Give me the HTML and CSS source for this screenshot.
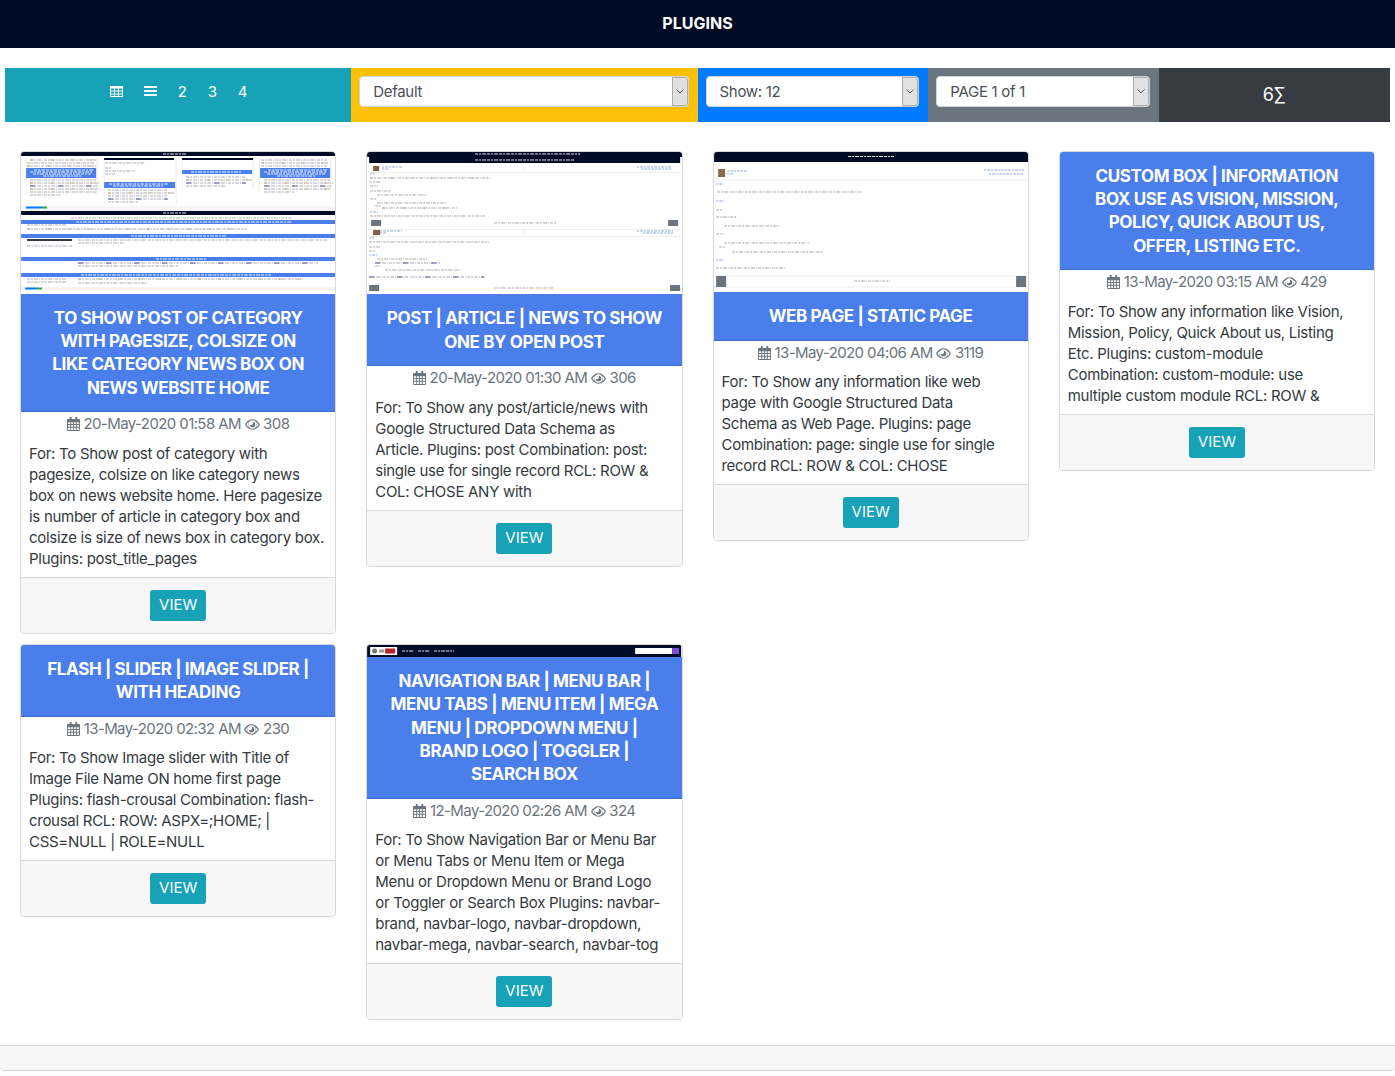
FILE: index.html
```html
<!DOCTYPE html>
<html lang="en">
<head>
<meta charset="utf-8">
<title>Plugins</title>
<link rel="stylesheet" href="styles.css">
</head>
<body>
<svg class="defs" width="0" height="0" aria-hidden="true">
  <symbol id="cal" viewBox="0 0 14 15"><path fill-rule="evenodd" d="M3 0h2v2h4V0h2v2h2a1 1 0 0 1 1 1v11a1 1 0 0 1-1 1H1a1 1 0 0 1-1-1V3a1 1 0 0 1 1-1h2zM1 5.500v2h2.500v-2zm3.500 0v2H6.500v-2zm3 0v2h2v-2zm3 0v2H13v-2zM1 8.500v2h2.500v-2zm3.500 0v2H6.500v-2zm3 0v2h2v-2zm3 0v2H13v-2zM1 11.500V14h2.500v-2.500zm3.500 0V14H6.500v-2.500zm3 0V14h2v-2.500zm3 0V14H13v-2.500z"/></symbol>
  <symbol id="eye" viewBox="0 0 16 11"><path fill-rule="evenodd" d="M8 0c3.400 0 6.300 2.100 8 5.500C14.300 8.900 11.400 11 8 11S1.700 8.900 0 5.500C1.700 2.100 4.600 0 8 0zM8 1a4.500 4.500 0 1 0 0 9 4.500 4.500 0 0 0 0-9zM1.400 5.500A9 9 0 0 0 4 8.300 5.500 5.500 0 0 1 4 2.700a9 9 0 0 0-2.600 2.800zm13.200 0A9 9 0 0 0 12 2.700a5.500 5.500 0 0 1 0 5.600 9 9 0 0 0 2.600-2.800zM8 2.500a3 3 0 1 1-3 3 1.500 1.500 0 0 0 3-3z"/></symbol>
</svg>

<header class="topbar">PLUGINS</header>

<section class="toolbar">
  <div class="tool tool-teal">
    <svg class="ico-grid" viewBox="0 0 13 11" aria-hidden="true"><path fill="#fff" fill-rule="evenodd" d="M0 0h13v11H0zM1 2.500v2h3v-2zm4 0v2h3v-2zm4 0v2h3v-2zM1 5.500v2h3v-2zm4 0v2h3v-2zm4 0v2h3v-2zM1 8.500V10h3V8.500zm4 0V10h3V8.500zm4 0V10h3V8.500z"/></svg>
    <svg class="ico-bars" viewBox="0 0 13 10" aria-hidden="true"><path fill="#fff" d="M0 0h13v2H0zM0 4h13v2H0zM0 8h13v2H0z"/></svg>
    <span class="num">2</span><span class="num">3</span><span class="num">4</span>
  </div>
  <div class="tool tool-yellow"><div class="sel"><select><option>Default</option></select><span class="sel-btn"><svg viewBox="0 0 8 5" aria-hidden="true"><path d="M.5.500 4 4 7.500.500" fill="none" stroke="#555"/></svg></span></div></div>
  <div class="tool tool-blue"><div class="sel"><select><option>Show: 12</option></select><span class="sel-btn"><svg viewBox="0 0 8 5" aria-hidden="true"><path d="M.5.500 4 4 7.500.500" fill="none" stroke="#555"/></svg></span></div></div>
  <div class="tool tool-grey"><div class="sel"><select><option>PAGE 1 of 1</option></select><span class="sel-btn"><svg viewBox="0 0 8 5" aria-hidden="true"><path d="M.5.500 4 4 7.500.500" fill="none" stroke="#555"/></svg></span></div></div>
  <div class="tool tool-dark">6∑</div>
</section>

<main class="grid">

  <article class="card">
    <svg class="thumb h142" viewBox="0 0 314 142" aria-hidden="true">
      <rect width="314" height="142" fill="#fff"/>
      <rect width="314" height="4" fill="#000c25"/>
      <path class="tw" d="M142 2h24"/>
      <path class="rule" d="M5 6v38M76 6v38M83 6v46M155 6v46M161 6v30M232 6v30M238 6v34M310 6v34"/>
      <rect x="83" y="6" width="70" height="2" fill="#000c25"/>
      <rect x="161" y="6" width="71" height="2" fill="#000c25"/>
      <path class="tc" d="M9 8h66M6 11h68M6 14h70M240 8h66M240 11h68M240 14h66M84 11h40M84 16h6M84 19h30M84 22h10"/>
      <path class="ty" d="M9 8h66M6 14h70M240 11h68"/>
      <rect x="5" y="16" width="70" height="10" fill="#4a7eea"/>
      <rect x="83" y="30" width="71" height="6" fill="#4a7eea"/>
      <rect x="161" y="18" width="70" height="4" fill="#4a7eea"/>
      <rect x="239" y="16" width="70" height="10" fill="#4a7eea"/>
      <path class="tw" d="M13 18h60M9 20h62M12 22h58M22 24h38M88 32h60M92 34h50M170 20h50M247 18h60M243 20h62M246 22h58M256 24h38"/>
      <path class="tc" d="M9 28h66M9 31h70M9 34h68M9 37h70M9 40h66M9 43h30M87 38h60M87 41h66M87 44h60M87 47h60M87 50h30M165 25h60M165 28h66M165 31h60M165 34h40M243 28h66M243 31h70M243 34h68M243 37h66M243 40h30"/>
      <path class="ty" d="M9 31h70M9 37h70M87 41h66M165 28h66M243 31h70M243 37h66"/>
      <path class="tv" d="M9 34h68M87 47h60M165 31h60M243 34h68"/>
      <rect y="54" width="314" height="5" fill="#f5f5f5"/>
      <path d="M5 55.500h8M13 55.500h8" stroke="#007bff" stroke-width="2"/><path d="M21 55.500h5" stroke="#28a745" stroke-width="2"/>
      <rect y="59" width="314" height="4" fill="#000c25"/>
      <path class="tw" d="M142 61h24"/>
      <path class="tc" d="M50 66h220"/>
      <rect y="68" width="314" height="4" fill="#4a7eea"/>
      <path class="tw" d="M55 70h215"/>
      <path class="tc" d="M6 73h40M6 77h220"/>
      <path class="ty" d="M6 77h220"/>
      <rect y="82" width="314" height="4" fill="#4a7eea"/>
      <path class="tw" d="M110 84h95"/>
      <rect x="6" y="87" width="45" height="2" fill="#343a40"/>
      <path class="tc" d="M57 88h250M57 91h45M6 94h45"/>
      <rect y="105" width="314" height="4" fill="#4a7eea"/>
      <path class="tw" d="M135 107h50"/>
      <path class="tc" d="M57 111h240M57 114h100"/>
      <path class="tv" d="M57 111h240"/>
      <rect y="121" width="314" height="4" fill="#4a7eea"/>
      <path class="tw" d="M60 123h190"/>
      <path class="tc" d="M6 127h40M57 127h225M6 130h40M57 131h70"/>
      <path class="ty" d="M57 127h225"/>
      <rect y="135" width="314" height="3" fill="#f5f5f5"/>
      <path d="M4 136.500h12" stroke="#007bff" stroke-width="2"/>
      <path d="M16 136.500h5" stroke="#28a745" stroke-width="2"/>
    </svg>
    <h5 class="title">TO SHOW POST OF CATEGORY<br>WITH PAGESIZE, COLSIZE ON<br>LIKE CATEGORY NEWS BOX ON<br>NEWS WEBSITE HOME</h5>
    <p class="meta"><svg class="cal"><use href="#cal"/></svg> 20-May-2020 01:58 AM <svg class="eye"><use href="#eye"/></svg> 308</p>
    <p class="text">For: To Show post of category with<br>pagesize, colsize on like category news<br>box on news website home. Here pagesize<br>is number of article in category box and<br>colsize is size of news box in category box.<br>Plugins: post_title_pages</p>
    <div class="foot"><a class="btn">VIEW</a></div>
  </article>

  <article class="card">
    <svg class="thumb h143" viewBox="0 0 314 142.600" aria-hidden="true">
      <rect width="314" height="143" fill="#fff"/>
      <rect width="316" height="5" fill="#000c25"/>
      <path class="tw" d="M108 2h105"/>
      <rect x="2" y="5" width="311" height="6" fill="#000c25"/>
      <path class="tw" d="M108 8h100"/>
      <rect x="6" y="14" width="6" height="5" fill="#8a5c3e"/>
      <path class="tb" d="M15 15h20M15 17h6M270 15h35M274 17h30"/>
      <path class="rule" d="M157 13v7M0 20.500h314M0 77.500h314M157 77v7M0 84.500h314"/>
      <path class="tb" d="M3 22h5M3 60h8"/>
      <path class="tc" d="M3 26h120M2 30h12M3 34h8M3 39h20M10 43h50M3 47h6M10 51h70M8 54h6M15 56h75M3 64h115"/>
      <path class="ty" d="M3 26h120M15 56h75"/>
      <rect x="4" y="68" width="10" height="6" fill="#6c757d"/>
      <rect x="301" y="68" width="10" height="6" fill="#6c757d"/>
      <path class="tc" d="M127 71h62"/>
      <rect x="6" y="78" width="7" height="5" fill="#8a5c3e"/>
      <path class="tb" d="M13 79h22M13 81h6M270 79h36M276 81h30"/>
      <path class="tb" d="M2 86h5M2 103h8"/>
      <path class="tc" d="M2 90h120M2 95h12M2 99h6M10 107h50M8 111h65M8 114h5M18 118h75M2 125h115"/>
      <path class="tv" d="M8 111h65M2 125h115"/>
      <rect x="2" y="133" width="10" height="6" fill="#6c757d"/>
      <rect x="303" y="133" width="10" height="6" fill="#6c757d"/>
      <path class="tc" d="M127 136h60"/>
    </svg>
    <h5 class="title">POST | ARTICLE | NEWS TO SHOW<br>ONE BY OPEN POST</h5>
    <p class="meta"><svg class="cal"><use href="#cal"/></svg> 20-May-2020 01:30 AM <svg class="eye"><use href="#eye"/></svg> 306</p>
    <p class="text">For: To Show any post/article/news with<br>Google Structured Data Schema as<br>Article. Plugins: post Combination: post:<br>single use for single record RCL: ROW &amp;<br>COL: CHOSE ANY with</p>
    <div class="foot"><a class="btn">VIEW</a></div>
  </article>

  <article class="card">
    <svg class="thumb h141" viewBox="0 0 314 140.800" aria-hidden="true">
      <rect width="314" height="141" fill="#fff"/>
      <rect width="314" height="10" fill="#000c25"/>
      <path class="tw" d="M134 4.500h46"/>
      <rect x="4" y="17" width="7" height="8" fill="#8a6a4e"/>
      <path class="tb" d="M13 19h20M13 22h6M270 18h40M275 22h35"/>
      <path class="rule" d="M0 28h314M0 124h314M0 135h314"/>
      <path class="tb" d="M2 32h6M2 49h8M2 108h8"/>
      <path class="tc" d="M3 40h145M2 58h7M2 65h20M10 74h55M2 82h8M10 91h85M5 95h6M18 100h90M2 116h70"/>
      <rect x="2" y="124" width="10" height="11" fill="#6c757d"/>
      <rect x="302" y="124" width="10" height="11" fill="#6c757d"/>
      <path class="tc" d="M140 129h36"/>
    </svg>
    <h5 class="title">WEB PAGE | STATIC PAGE</h5>
    <p class="meta"><svg class="cal"><use href="#cal"/></svg> 13-May-2020 04:06 AM <svg class="eye"><use href="#eye"/></svg> 3119</p>
    <p class="text">For: To Show any information like web<br>page with Google Structured Data<br>Schema as Web Page. Plugins: page<br>Combination: page: single use for single<br>record RCL: ROW &amp; COL: CHOSE</p>
    <div class="foot"><a class="btn">VIEW</a></div>
  </article>

  <article class="card">
    <h5 class="title">CUSTOM BOX | INFORMATION<br>BOX USE AS VISION, MISSION,<br>POLICY, QUICK ABOUT US,<br>OFFER, LISTING ETC.</h5>
    <p class="meta"><svg class="cal"><use href="#cal"/></svg> 13-May-2020 03:15 AM <svg class="eye"><use href="#eye"/></svg> 429</p>
    <p class="text">For: To Show any information like Vision,<br>Mission, Policy, Quick About us, Listing<br>Etc. Plugins: custom-module<br>Combination: custom-module: use<br>multiple custom module RCL: ROW &amp;</p>
    <div class="foot"><a class="btn">VIEW</a></div>
  </article>

  <article class="card">
    <h5 class="title">FLASH | SLIDER | IMAGE SLIDER |<br>WITH HEADING</h5>
    <p class="meta"><svg class="cal"><use href="#cal"/></svg> 13-May-2020 02:32 AM <svg class="eye"><use href="#eye"/></svg> 230</p>
    <p class="text">For: To Show Image slider with Title of<br>Image File Name ON home first page<br>Plugins: flash-crousal Combination: flash-<br>crousal RCL: ROW: ASPX=;HOME; |<br>CSS=NULL | ROLE=NULL</p>
    <div class="foot"><a class="btn">VIEW</a></div>
  </article>

  <article class="card">
    <svg class="thumb h12" viewBox="0 0 314 12" aria-hidden="true">
      <rect width="314" height="12" fill="#000c25"/>
      <rect x="3" y="2" width="27" height="8" fill="#fff"/>
      <circle cx="7.500" cy="6" r="2.500" fill="#777"/>
      <rect x="12" y="4.500" width="5" height="3" fill="#999"/>
      <rect x="18" y="3.500" width="10" height="5" fill="#c0202a"/>
      <path class="tw" d="M35 6h12M51 6h12M67 6h20"/>
      <rect x="268" y="3" width="37" height="6" fill="#fff"/>
      <rect x="305" y="3" width="7" height="6" fill="#7a4fe0"/>
    </svg>
    <h5 class="title">NAVIGATION BAR | MENU BAR |<br>MENU TABS | MENU ITEM | MEGA<br>MENU | DROPDOWN MENU |<br>BRAND LOGO | TOGGLER |<br>SEARCH BOX</h5>
    <p class="meta"><svg class="cal"><use href="#cal"/></svg> 12-May-2020 02:26 AM <svg class="eye"><use href="#eye"/></svg> 324</p>
    <p class="text">For: To Show Navigation Bar or Menu Bar<br>or Menu Tabs or Menu Item or Mega<br>Menu or Dropdown Menu or Brand Logo<br>or Toggler or Search Box Plugins: navbar-<br>brand, navbar-logo, navbar-dropdown,<br>navbar-mega, navbar-search, navbar-tog</p>
    <div class="foot"><a class="btn">VIEW</a></div>
  </article>

</main>

<footer class="pagefoot"></footer>
</body>
</html>
```
FILE: styles.css
```css
* { box-sizing: border-box; }
html, body { margin: 0; padding: 0; }
body {
  font-family: Inter, "Open Sans", "Liberation Sans", sans-serif;
  font-size: 15px;
  line-height: 21px;
  color: #343a40;
  background: #fff;
}
.defs { position: absolute; }

.topbar {
  height: 48px;
  background: #000c25;
  color: #fff;
  font-weight: 700;
  font-size: 16px;
  line-height: 47px;
  text-align: center;
}

.toolbar {
  display: grid;
  grid-template-columns: 25% 25% 1fr 1fr 1fr;
  margin: 20px 5px 0;
  height: 54px;
}
.tool { padding: 8px 9px 8px 8px; }
.tool-teal {
  background: #17a2b8;
  color: #fff;
  display: flex;
  justify-content: center;
  align-items: center;
  gap: 21px;
  padding: 0 0 8px;
}
.tool-yellow { background: #ffc107; }
.tool-blue { background: #007bff; }
.tool-grey { background: #6c757d; }
.tool-dark {
  background: #373b42;
  color: #fff;
  font-size: 18px;
  text-align: center;
  line-height: 38px;
}
.ico-grid { width: 13px; height: 11px; }
.ico-bars { width: 13px; height: 10px; }
.num { width: 9px; text-align: center; }

.sel { position: relative; height: 31px; }
.sel select {
  display: block;
  width: 100%;
  height: 31px;
  padding: 0 13px;
  border: 1px solid #ced4da;
  border-radius: 4px;
  background: #fff;
  color: #495057;
  font: 15px Inter, "Open Sans", sans-serif;
  letter-spacing: -0.3px;
  appearance: none;
  -webkit-appearance: none;
}
.sel-btn {
  position: absolute;
  top: 1px;
  right: 1px;
  width: 16px;
  height: 29px;
  background: #e1e1e1;
  border: 1px solid #ababab;
  border-radius: 0 3px 3px 0;
  display: flex;
  align-items: center;
  justify-content: center;
}
.sel-btn svg { width: 8px; height: 5px; }

.grid {
  display: grid;
  grid-template-columns: repeat(4, 25%);
  align-items: start;
  margin: 28.500px 5px 0;
}
.card {
  margin: 0 15px 10px;
  border: 1px solid #d9d9d9;
  border-radius: 4px;
  overflow: hidden;
  background: #fff;
}
.thumb { display: block; width: 100%; filter: blur(.35px); }
.h142 { height: 142px; }
.h143 { height: 142.600px; }
.h141 { height: 140.800px; }
.h12 { height: 12px; }
.tw { stroke: #fff; stroke-width: 1; stroke-dasharray: 3 1 2 1 4 1; fill: none; opacity: .9; }
.tc { stroke: #7d7d8a; stroke-width: 1; stroke-dasharray: 3 1 2 1 4 1 1 1; fill: none; opacity: .65; }
.ty { stroke: #d2a35c; stroke-width: 1; stroke-dasharray: 3 17; fill: none; opacity: .8; }
.tv { stroke: #2f3a90; stroke-width: 1; stroke-dasharray: 5 23; fill: none; opacity: .8; }
.tb { stroke: #6f95d8; stroke-width: 1; stroke-dasharray: 2 1 3 1; fill: none; opacity: .8; }
.rule { stroke: #eeeeee; stroke-width: 1; fill: none; }

.title {
  margin: 0;
  padding: 13px 8px 11px;
  background: #4a7eea;
  border-bottom: 1px solid #3e6dd0;
  color: #fff;
  font-size: 17px;
  font-weight: 700;
  letter-spacing: -0.37px;
  line-height: 23.400px;
  text-align: center;
  white-space: nowrap;
}
.meta {
  margin: 0 0 8.600px;
  padding-top: 1px;
  color: #6c757d;
  letter-spacing: -0.6px;
  text-align: center;
  white-space: nowrap;
}
.cal { width: 13px; height: 14px; fill: #6c757d; vertical-align: -2px; }
.eye { width: 15px; height: 11px; fill: #6c757d; vertical-align: -1px; }
.text {
  margin: 0;
  padding: 0 8px 8px;
  letter-spacing: -0.28px;
  white-space: nowrap;
}
.foot {
  border-top: 1px solid #d9d9d9;
  background: #f7f7f7;
  padding: 12px;
  text-align: center;
}
.btn {
  display: inline-block;
  width: 56px;
  height: 31px;
  border-radius: 3px;
  background: #17a2b8;
  color: #fff;
  line-height: 29px;
  text-align: center;
  vertical-align: top;
}
.pagefoot {
  margin-top: 15px;
  height: 26px;
  background: #f7f7f7;
  border-top: 1px solid #d9d9d9;
  border-bottom: 1px solid #d9d9d9;
  border-radius: 0 0 4px 4px;
}
```
